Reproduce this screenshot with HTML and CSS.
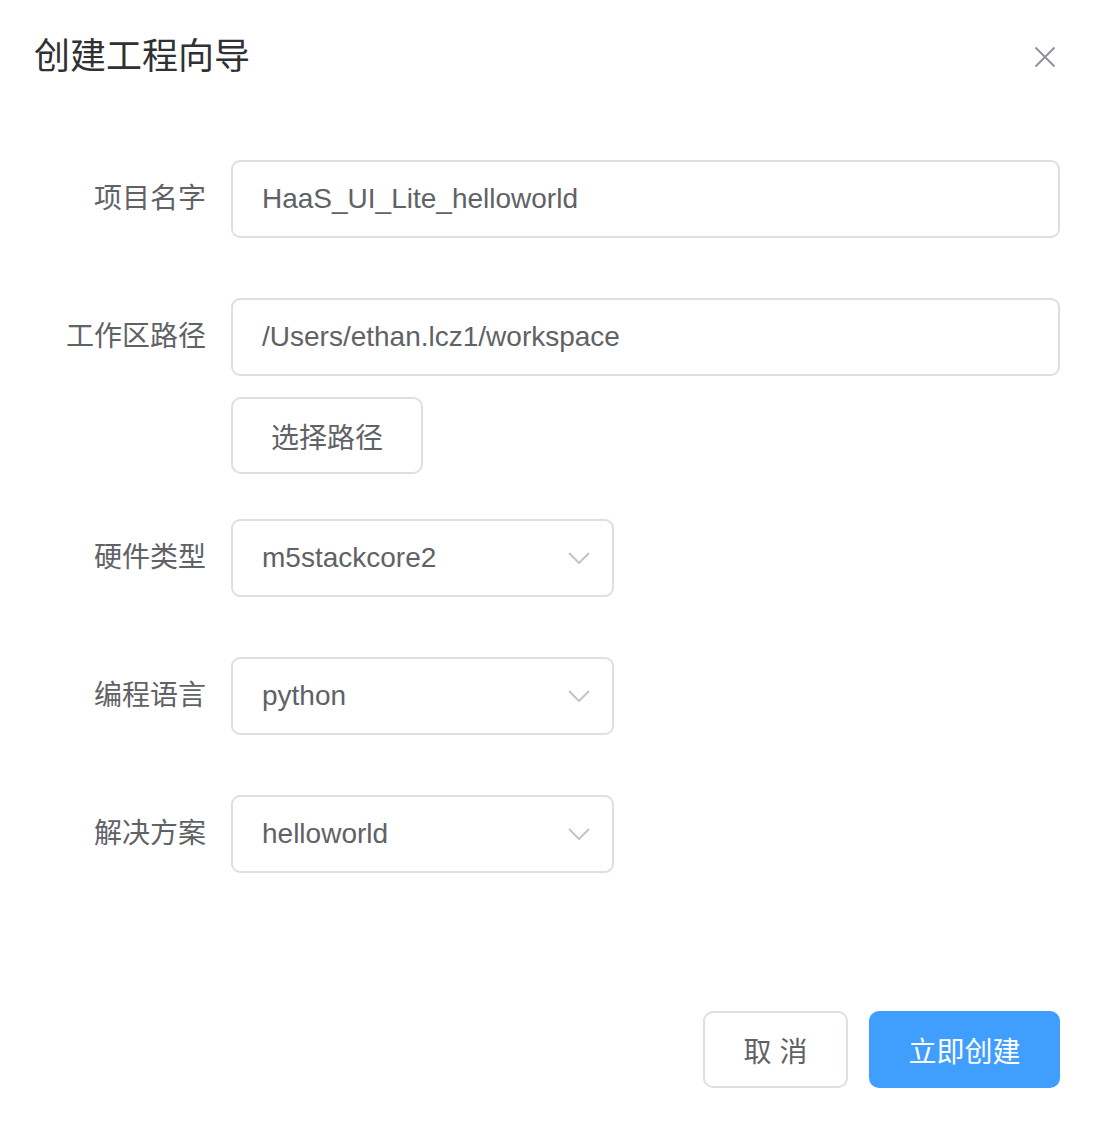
FILE: index.html
```html
<!DOCTYPE html>
<html lang="zh-CN">
<head>
<meta charset="utf-8">
<title>创建工程向导</title>
<link rel="stylesheet" href="styles.css">
</head>
<body>
<div class="dialog">
  <div class="header">
    <span class="title">创建工程向导</span>
    <button class="close" aria-label="关闭">
      <svg width="22" height="22" viewBox="0 0 22 22"><path d="M1.5 1.5 L20.5 20.5 M20.5 1.5 L1.5 20.5" stroke="#909399" stroke-width="2" fill="none"/></svg>
    </button>
  </div>
  <div class="form">
    <div class="item item-name">
      <label class="label">项目名字</label>
      <div class="content"><div class="input wide">HaaS_UI_Lite_helloworld</div></div>
    </div>
    <div class="item item-path">
      <label class="label">工作区路径</label>
      <div class="content">
        <div class="input wide">/Users/ethan.lcz1/workspace</div>
        <button class="btn btn-path">选择路径</button>
      </div>
    </div>
    <div class="item item-sel">
      <label class="label">硬件类型</label>
      <div class="content"><div class="input select">m5stackcore2<svg class="arrow" width="22" height="12" viewBox="0 0 22 12"><path d="M1 1 L11 11 L21 1" stroke="#c0c4cc" stroke-width="2" fill="none"/></svg></div></div>
    </div>
    <div class="item item-sel">
      <label class="label">编程语言</label>
      <div class="content"><div class="input select">python<svg class="arrow" width="22" height="12" viewBox="0 0 22 12"><path d="M1 1 L11 11 L21 1" stroke="#c0c4cc" stroke-width="2" fill="none"/></svg></div></div>
    </div>
    <div class="item item-sel">
      <label class="label">解决方案</label>
      <div class="content"><div class="input select">helloworld<svg class="arrow" width="22" height="12" viewBox="0 0 22 12"><path d="M1 1 L11 11 L21 1" stroke="#c0c4cc" stroke-width="2" fill="none"/></svg></div></div>
    </div>
  </div>
  <div class="footer">
    <button class="btn btn-cancel">取 消</button>
    <button class="btn btn-primary">立即创建</button>
  </div>
</div>
</body>
</html>
```

FILE: styles.css
```css
* { box-sizing: border-box; }
html, body { margin: 0; padding: 0; background: #fff; }
body {
  font-family: "Liberation Sans", Arial, "Noto Sans CJK SC", sans-serif;
  color: #606266;
}
.dialog {
  width: 1100px;
  height: 1125px;
  padding: 0 40px 0 34px;
}
.header {
  display: flex;
  justify-content: space-between;
  align-items: center;
  padding-top: 33px;
  height: 81px;
}
.title {
  font-size: 36px;
  line-height: 48px;
  color: #303133;
}
.close {
  border: 0;
  background: none;
  padding: 0;
  margin-right: 4px;
  width: 22px;
  height: 22px;
  display: flex;
  cursor: pointer;
}
.form {
  margin-top: 79px;
}
.item {
  display: flex;
  align-items: flex-start;
}
.item-name { margin-bottom: 60px; }
.item-path { margin-bottom: 45px; }
.item-sel { margin-bottom: 60px; }
.label {
  width: 197px;
  flex: none;
  padding-right: 25px;
  text-align: right;
  font-size: 28px;
  line-height: 78px;
  color: #606266;
}
.content {
  flex: 1;
  display: flex;
  flex-direction: column;
  align-items: flex-start;
}
.input {
  height: 78px;
  border: 2px solid #dcdfe6;
  border-radius: 9px;
  padding: 0 29px;
  font-size: 28px;
  line-height: 74px;
  color: #606266;
  display: flex;
  align-items: center;
  position: relative;
}
.wide { width: 829px; }
.select { width: 383px; }
.arrow {
  position: absolute;
  right: 22px;
  top: 31px;
}
.btn {
  font-family: "Liberation Sans", Arial, "Noto Sans CJK SC", sans-serif;
  font-size: 28px;
  height: 77px;
  border: 2px solid #dcdfe6;
  border-radius: 10px;
  background: #fff;
  color: #606266;
  padding: 0;
  cursor: pointer;
}
.btn-path {
  margin-top: 21px;
  width: 192px;
}
.footer {
  display: flex;
  justify-content: flex-end;
  gap: 21px;
  margin-top: 138px;
}
.btn-cancel { width: 145px; }
.btn-primary {
  width: 191px;
  background: #409eff;
  border-color: #409eff;
  color: #fff;
}
```
